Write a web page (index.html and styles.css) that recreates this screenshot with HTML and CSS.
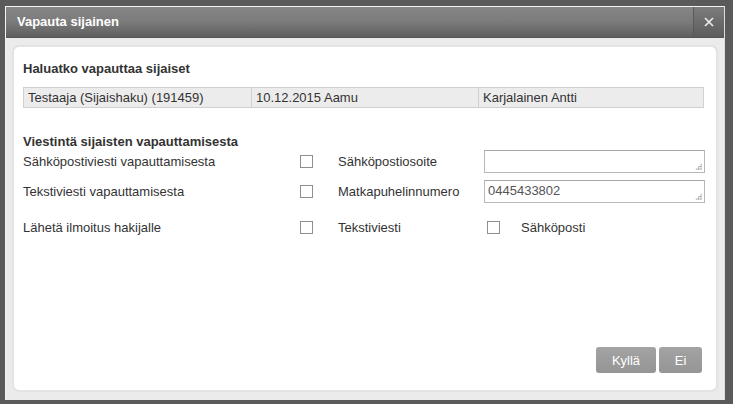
FILE: index.html
```html
<!DOCTYPE html>
<html>
<head>
<meta charset="utf-8">
<link rel="stylesheet" href="styles.css">
</head>
<body>
<div class="dialog">
  <div class="titlebar">
    <div class="title">Vapauta sijainen</div>
    <div class="close">
      <svg width="10" height="10" viewBox="0 0 10 10"><path d="M1 1 L9 9 M9 1 L1 9" stroke="#f0f0f0" stroke-width="1.6"/></svg>
    </div>
  </div>
  <div class="body">
    <div class="panel">
      <h2 class="heading">Haluatko vapauttaa sijaiset</h2>
      <div class="table">
        <div class="cell">Testaaja (Sijaishaku) (191459)</div>
        <div class="cell">10.12.2015 Aamu</div>
        <div class="cell">Karjalainen Antti</div>
      </div>
      <h2 class="heading heading2">Viestintä sijaisten vapauttamisesta</h2>
      <div class="form">
        <div class="row r1">
          <span class="lbl">Sähköpostiviesti vapauttamisesta</span>
          <span class="cb"></span>
          <span class="lbl2">Sähköpostiosoite</span>
          <div class="field"><span class="grip"></span></div>
        </div>
        <div class="row r2">
          <span class="lbl">Tekstiviesti vapauttamisesta</span>
          <span class="cb"></span>
          <span class="lbl2">Matkapuhelinnumero</span>
          <div class="field">0445433802<span class="grip"></span></div>
        </div>
        <div class="row r3">
          <span class="lbl">Lähetä ilmoitus hakijalle</span>
          <span class="cb"></span>
          <span class="lbl2">Tekstiviesti</span>
          <div class="opt"><span class="cb"></span><span class="lbl3">Sähköposti</span></div>
        </div>
      </div>
      <div class="buttons">
        <button class="btn btn-yes">Kyllä</button>
        <button class="btn btn-no">Ei</button>
      </div>
    </div>
  </div>
</div>
</body>
</html>
```
FILE: styles.css
```css
html, body {
  margin: 0;
  padding: 0;
}
body {
  width: 733px;
  height: 404px;
  background: #5a5a5a;
  font-family: "Liberation Sans", Arial, sans-serif;
  font-size: 13px;
  color: #333;
  overflow: hidden;
  padding: 6px 0 0 5px;
  box-sizing: border-box;
}
.dialog {
  width: 720px;
  height: 394px;
  background: #ebebeb;
  border-top: 1px solid #f4f4f4;
  border-left: 1px solid #f4f4f4;
  border-right: 1px solid #dcdcdc;
  box-sizing: border-box;
  display: flex;
  flex-direction: column;
}
.titlebar {
  height: 30px;
  display: flex;
  background: linear-gradient(#858585 0%, #7b7b7b 50%, #5e5e5e 100%);
  border-bottom: 1px solid #555;
}
.title {
  flex: 1;
  color: #fff;
  font-weight: bold;
  font-size: 13px;
  line-height: 30px;
  padding-left: 11px;
}
.close {
  width: 30px;
  border-left: 1px solid #5a5a5a;
  background: linear-gradient(#7c7c7c, #5c5c5c);
  display: flex;
  align-items: center;
  justify-content: center;
}
.body {
  flex: 1;
  padding: 7px 7px 8px 6px;
  display: flex;
}
.panel {
  flex: 1;
  background: #fff;
  border: 2px solid #e3e3e3;
  border-radius: 7px;
  padding: 14px 11px 0 9px;
  position: relative;
}
.heading {
  margin: 0;
  font-size: 13px;
  font-weight: bold;
  color: #333;
  line-height: 16px;
}
.table {
  margin-top: 10px;
  display: grid;
  grid-template-columns: 227px 227px 227px;
  background: #ececec;
  border: 1px solid #d0d0d0;
  width: 681px;
  box-sizing: border-box;
}
.cell {
  line-height: 19px;
  padding-left: 4px;
  border-left: 1px solid #d0d0d0;
}
.cell:first-child {
  border-left: none;
}
.heading2 {
  margin-top: 26px;
}
.form {
  display: flex;
  flex-direction: column;
}
.row {
  display: grid;
  grid-template-columns: 277px 38px 146px 221px;
  align-items: center;
}
.r1 { height: 23px; margin-top: 0; }
.r2 { height: 23px; margin-top: 7px; }
.r3 { height: 23px; margin-top: 13px; }
.cb {
  display: block;
  width: 11px;
  height: 11px;
  border: 1px solid #8f8f8f;
  background: #fff;
}
.field {
  height: 23px;
  border: 1px solid #b8b8b8;
  border-top-color: #a8a8a8;
  box-sizing: border-box;
  padding-left: 3px;
  line-height: 20px;
  color: #555;
  position: relative;
}
.grip {
  position: absolute;
  right: 2px;
  bottom: 2px;
  width: 7px;
  height: 7px;
  background:
    radial-gradient(circle, #aaa 0.8px, transparent 1px) 0 0 / 2.4px 2.4px;
  clip-path: polygon(100% 0, 100% 100%, 0 100%);
}
.opt {
  display: flex;
  align-items: center;
  padding-left: 3px;
}
.lbl3 {
  margin-left: 21px;
}
.buttons {
  position: absolute;
  right: 14px;
  bottom: 17px;
  display: flex;
  gap: 3px;
}
.btn {
  font-family: "Liberation Sans", Arial, sans-serif;
  font-size: 13px;
  color: #fff;
  background: linear-gradient(#a3a3a3, #959595);
  border: none;
  border-radius: 3px;
  height: 26px;
  padding: 0;
}
.btn-yes { width: 60px; }
.btn-no { width: 43px; }
```
